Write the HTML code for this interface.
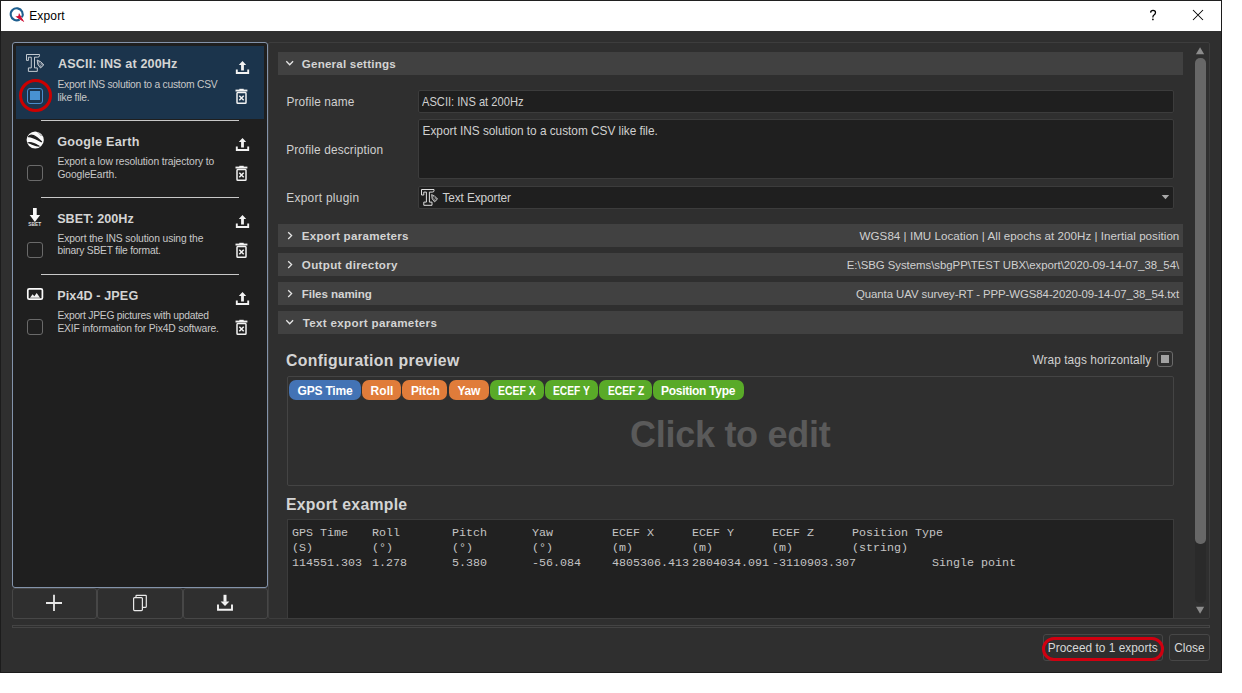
<!DOCTYPE html>
<html><head><meta charset="utf-8">
<style>
*{box-sizing:border-box;margin:0;padding:0}
html,body{width:1242px;height:693px;overflow:hidden;background:#fff;font-family:"Liberation Sans",sans-serif}
.abs{position:absolute}
.bm{display:inline-block;width:0;height:0}
#dlg{position:absolute;left:0;top:0;width:1222px;height:673px;background:#2f2f2f;border:1px solid #1c1c1c;border-top-color:#202020}
#title{position:absolute;left:1px;top:1px;width:1220px;height:30px;background:#fff}
.t{position:absolute;white-space:pre;line-height:1}
#lp{position:absolute;left:12px;top:42px;width:256px;height:546px;background:#1f1f1f;border:1px solid #8393aa;border-radius:3px}
.sel{position:absolute;left:16px;top:46px;width:248px;height:73px;background:#1b344c}
.sep{position:absolute;left:41px;width:198px;height:1px;background:#c8c8c8}
.name{font-weight:bold;font-size:12.6px;color:#d2d2d2}
.desc{font-size:9.8px;color:#c8c8c8;line-height:13px}
.cb{position:absolute;width:16px;height:16px;border:1px solid #6a6a6a;border-radius:3px}
.btn{position:absolute;top:588px;height:31px;border:1px solid #474747;border-radius:3px}
#sa{position:absolute;left:268px;top:42px;width:942px;height:577px;border:1px solid #3d3d3d;border-radius:2px}
.hdr{position:absolute;left:278px;width:905px;height:23px;background:#414141}
.hdr .ht{position:absolute;left:25px;top:6px;font-weight:bold;font-size:11.6px;color:#d2d2d2;white-space:pre;line-height:1}
.hdr .hv{position:absolute;right:4px;top:6px;font-size:12px;color:#d0d0d0;white-space:pre;line-height:1}
.fld{position:absolute;left:418px;width:756px;background:#1f1f1f;border:1px solid #3c3c3c;border-radius:2px}
.lbl{font-size:11.85px;color:#d0d0d0}
.tag{position:absolute;top:380px;height:20px;border-radius:7px;color:#fff;font-weight:bold;font-size:12px;text-align:center;line-height:20px}
.bl{background:#4373b5}.or{background:#e07c3a}.gr{background:#59aa28}
.mono{font-family:"Liberation Mono",monospace;font-size:11.67px;color:#c4c4c4}
</style></head><body>
<div id="dlg"></div>
<div id="title"></div>
<!-- logo -->
<svg class="abs" style="left:0;top:0" width="30" height="30" viewBox="0 0 30 30">
<path d="M19.7 19.5 A6 6 0 1 1 21.9 17.3" fill="none" stroke="#1e5f8f" stroke-width="2.1"/>
<path d="M19 12.9 L24.2 21.9 L15.3 16.5 L18.3 16 Z" fill="#cf1237"/><path d="M17.2 17.5 L24.2 21.9 L19.8 15.5 Z" fill="#cf1237"/>
</svg>
<svg class="abs" style="left:1145px;top:5px" width="16" height="20" viewBox="1145 5 16 20"><path d="M1150.6 12.6 Q1150.7 10.4 1153 10.4 Q1155.5 10.4 1155.5 12.6 Q1155.5 14.1 1154 15 Q1152.9 15.7 1152.9 17 V17.6" fill="none" stroke="#000" stroke-width="1.25"/><circle cx="1152.9" cy="19.4" r="0.85" fill="#000"/></svg>
<svg class="abs" style="left:1192px;top:9px" width="12" height="12" viewBox="0 0 12 12"><path d="M1 1L11 11M11 1L1 11" stroke="#000" stroke-width="1.05"/></svg>

<!-- left panel -->
<div id="lp"></div>
<div class="sel"></div>
<div class="sep" style="top:120px"></div>
<div class="sep" style="top:197px"></div>
<div class="sep" style="top:274px"></div>


<div class="cb" style="left:27px;top:88px;border-color:#4a8ccc"></div>
<div class="abs" style="left:30.2px;top:91px;width:9.6px;height:9.4px;background:#4892d2"></div>
<div class="abs" style="left:19px;top:79px;width:33px;height:33px;border:3.4px solid #cc0000;border-radius:50%"></div>
<div class="cb" style="left:27px;top:165px"></div>
<div class="cb" style="left:27px;top:242px"></div>
<div class="cb" style="left:27px;top:319px"></div>

<div class="btn" style="left:12px;width:85px"></div>
<div class="btn" style="left:97px;width:86px"></div>
<div class="btn" style="left:183px;width:85px"></div>

<!-- right -->
<div id="sa"></div>
<div class="hdr" style="top:52px"></div>
<div class="fld" style="top:90px;height:23px"></div>
<div class="fld" style="top:119px;height:60px"></div>
<div class="fld" style="top:186px;height:23px"></div>

<div class="hdr" style="top:224px"></div>
<div class="hdr" style="top:253px"></div>
<div class="hdr" style="top:282px"></div>
<div class="hdr" style="top:311px"></div>

<div class="abs" style="left:287px;top:376px;width:887px;height:110px;border:1px solid #444;border-radius:2px"></div>

<div class="abs" style="left:287px;top:519px;width:887px;height:99px;background:#212121;border:1px solid #3c3c3c;border-bottom:none"></div>

<div class="abs" style="left:12px;top:625px;width:1198px;height:3px;border:1px solid #444"></div>
<div class="abs" style="left:1043px;top:634px;width:120px;height:27px;border:1px solid #474747;border-radius:3px"></div>
<div class="abs" style="left:1169px;top:634px;width:41px;height:27px;border:1px solid #474747;border-radius:3px"></div>

<!-- item icons -->
<svg class="abs" style="left:0;top:0" width="270" height="340" viewBox="0 0 270 340">
 <g fill="none" stroke="#d6dadf" stroke-width="0.9">
  <path d="M26.5 54.5H39.5V55.8Q39.5 57.2 37.5 57.2H34.5V67.9H37.3V71.4H28.4V67.9H31.3V57.2H28.4V60.4H26.5Z"/>
 </g>
 <path d="M37.2 60 L40.8 61.8 L43.9 64.8 L40.6 68 L37.8 64.6 Z" fill="#7a8796" stroke="#d8dce0" stroke-width="0.8"/>
 <path d="M38.6 62.6 L42 66 M40.3 62 L39.5 65.5" stroke="#1b3048" stroke-width="0.7"/>
 <!-- globe -->
 <circle cx="35.2" cy="140" r="8.6" fill="#fafafa"/>
 <path d="M28.8 136.5 C31 133.5 35 135.5 41.8 142 C37 139.5 33 136.5 28.8 136.5Z" fill="#1e1e1e" stroke="#1e1e1e" stroke-width="1.3"/>
 <path d="M28.5 142.8 C31 141.8 35 144 39.5 146.3 C35 146 31.5 143.5 28.5 142.8Z" fill="#1e1e1e" stroke="#1e1e1e" stroke-width="1.1"/>
 <path d="M38 132.5 L41.5 136" stroke="#1e1e1e" stroke-width="0.9" stroke-dasharray="1 0.7"/>
 <!-- sbet arrow -->
 <rect x="33" y="208" width="3.7" height="7.5" fill="#fafafa"/>
 <path d="M29.7 215 H40.1 L34.9 222 Z" fill="#fafafa"/>
 <text x="34.8" y="226.3" font-family="Liberation Sans" font-weight="bold" font-size="5.2" fill="#dcdcdc" text-anchor="middle" textLength="13" lengthAdjust="spacingAndGlyphs">SBET</text>
 <!-- picture -->
 <rect x="27.8" y="288.8" width="14.6" height="10.4" rx="1.5" fill="none" stroke="#fafafa" stroke-width="1.7"/>
 <path d="M30 297.8 L32.6 294.2 L34.3 296.2 L36.7 293 L40 297.8 Z" fill="#f0f0f0"/>
</svg>
<!-- upload / trash icons x4 -->
<svg class="abs" style="left:0;top:0" width="270" height="340" viewBox="0 0 270 340">

<g transform="translate(0,0)">
   <path d="M242.5 61 L246.2 65 H243.9 V70.5 H241.1 V65 H238.8 Z" fill="#f2f2f2"/>
   <path d="M236.8 69.5 V73 H248.2 V69.5" fill="none" stroke="#f2f2f2" stroke-width="1.9"/>
  
   <rect x="235.5" y="89.6" width="11.9" height="1.9" fill="#f2f2f2"/>
   <rect x="239.3" y="88.8" width="4.4" height="1.5" fill="#f2f2f2"/>
   <rect x="237" y="92.6" width="9" height="10.6" rx="0.8" fill="none" stroke="#f2f2f2" stroke-width="1.5"/>
   <path d="M239.3 95.8 L243.7 100.3 M243.7 95.8 L239.3 100.3" stroke="#f2f2f2" stroke-width="1.5"/>
  </g>
<g transform="translate(0,77)">
   <path d="M242.5 61 L246.2 65 H243.9 V70.5 H241.1 V65 H238.8 Z" fill="#f2f2f2"/>
   <path d="M236.8 69.5 V73 H248.2 V69.5" fill="none" stroke="#f2f2f2" stroke-width="1.9"/>
  
   <rect x="235.5" y="89.6" width="11.9" height="1.9" fill="#f2f2f2"/>
   <rect x="239.3" y="88.8" width="4.4" height="1.5" fill="#f2f2f2"/>
   <rect x="237" y="92.6" width="9" height="10.6" rx="0.8" fill="none" stroke="#f2f2f2" stroke-width="1.5"/>
   <path d="M239.3 95.8 L243.7 100.3 M243.7 95.8 L239.3 100.3" stroke="#f2f2f2" stroke-width="1.5"/>
  </g>
<g transform="translate(0,154)">
   <path d="M242.5 61 L246.2 65 H243.9 V70.5 H241.1 V65 H238.8 Z" fill="#f2f2f2"/>
   <path d="M236.8 69.5 V73 H248.2 V69.5" fill="none" stroke="#f2f2f2" stroke-width="1.9"/>
  
   <rect x="235.5" y="89.6" width="11.9" height="1.9" fill="#f2f2f2"/>
   <rect x="239.3" y="88.8" width="4.4" height="1.5" fill="#f2f2f2"/>
   <rect x="237" y="92.6" width="9" height="10.6" rx="0.8" fill="none" stroke="#f2f2f2" stroke-width="1.5"/>
   <path d="M239.3 95.8 L243.7 100.3 M243.7 95.8 L239.3 100.3" stroke="#f2f2f2" stroke-width="1.5"/>
  </g>
<g transform="translate(0,231)">
   <path d="M242.5 61 L246.2 65 H243.9 V70.5 H241.1 V65 H238.8 Z" fill="#f2f2f2"/>
   <path d="M236.8 69.5 V73 H248.2 V69.5" fill="none" stroke="#f2f2f2" stroke-width="1.9"/>
  
   <rect x="235.5" y="89.6" width="11.9" height="1.9" fill="#f2f2f2"/>
   <rect x="239.3" y="88.8" width="4.4" height="1.5" fill="#f2f2f2"/>
   <rect x="237" y="92.6" width="9" height="10.6" rx="0.8" fill="none" stroke="#f2f2f2" stroke-width="1.5"/>
   <path d="M239.3 95.8 L243.7 100.3 M243.7 95.8 L239.3 100.3" stroke="#f2f2f2" stroke-width="1.5"/>
  </g>

</svg>
<!-- bottom buttons icons -->
<svg class="abs" style="left:0;top:580px" width="270" height="40" viewBox="0 580 270 40">
 <path d="M54 594.8 V611 M46 603 H62" stroke="#e8e8e8" stroke-width="1.8"/>
 <rect x="133.6" y="597.6" width="8.8" height="13" rx="1" fill="none" stroke="#e8e8e8" stroke-width="1.2"/>
 <path d="M136 597.5 V595.8 Q136 595.3 136.6 595.3 H145.6 Q146.3 595.3 146.3 596 V606.6 Q146.3 607.3 145.6 607.3 H143" fill="none" stroke="#e8e8e8" stroke-width="1.2"/>
 <rect x="223.5" y="594.8" width="3" height="7" fill="#f2f2f2"/>
 <path d="M220.6 601.5 H229.4 L225 606 Z" fill="#f2f2f2"/>
 <path d="M218 604.5 V609.8 H232 V604.5" fill="none" stroke="#f2f2f2" stroke-width="1.9"/>
</svg>
<!-- chevrons -->
<svg class="abs" style="left:280px;top:40px" width="20" height="300" viewBox="280 40 20 300">
 <g fill="none" stroke="#e6e6e6" stroke-width="1.3">
  <path d="M286.3 61.2 L289.7 64.8 L293.1 61.2"/>
  <path d="M288.2 232.2 L291.6 235.6 L288.2 239"/>
  <path d="M288.2 261.2 L291.6 264.6 L288.2 268"/>
  <path d="M288.2 290.2 L291.6 293.6 L288.2 297"/>
  <path d="M286.3 320.2 L289.7 323.8 L293.1 320.2"/>
 </g>
</svg>
<!-- plugin icon in combo -->
<svg class="abs" style="left:418px;top:186px" width="22" height="22" viewBox="0 0 22 22">
 <path d="M3.5 3.5H16V4.8Q16 6.1 14.2 6.1H11.4V16.1H14V19.3H5.8V16.1H8.4V6.1H5.8V9H3.5Z" fill="none" stroke="#dedede" stroke-width="1"/>
 <path d="M13.6 8.5 L16.8 10.2 L19.6 13 L16.6 15.9 L14.1 12.8 Z" fill="#777" stroke="#d0d0d0" stroke-width="0.8"/>
 <path d="M14.9 10.9 L18 14 M16.5 10.3 L15.8 13.5" stroke="#212121" stroke-width="0.7"/>
</svg>
<svg class="abs" style="left:1160px;top:193px" width="12" height="8" viewBox="0 0 12 8"><path d="M1.7 1.9 H9.2 L5.45 6.2Z" fill="#a8a8a8"/></svg>
<!-- wrap checkbox -->
<div class="cb" style="left:1157px;top:351px;border-color:#6a6a6a"></div>
<div class="abs" style="left:1161px;top:355px;width:8px;height:8px;background:#a2a2a2"></div>
<!-- scrollbar -->
<div class="abs" style="left:1195px;top:58px;width:11px;height:545px;background:#2a2a2a;border-radius:5px"></div>
<div class="abs" style="left:1195px;top:58px;width:11px;height:486px;background:#676767;border-radius:5px"></div>
<svg class="abs" style="left:1190px;top:44px" width="20" height="14" viewBox="0 0 20 14"><path d="M5.9 10.3 H14.2 L10.05 3.2Z" fill="#8c8c8c"/></svg>
<svg class="abs" style="left:1190px;top:604px" width="20" height="12" viewBox="0 0 20 12"><path d="M6 2.8 H14.2 L10.1 9.7Z" fill="#8c8c8c"/></svg>
<!-- mono text -->
<div class="abs mono" style="left:292px;top:526px;line-height:15px;white-space:pre">
<span class="abs" style="left:0;top:0">GPS Time</span><span class="abs" style="left:80px;top:0">Roll</span><span class="abs" style="left:160px;top:0">Pitch</span><span class="abs" style="left:240px;top:0">Yaw</span><span class="abs" style="left:320px;top:0">ECEF X</span><span class="abs" style="left:400px;top:0">ECEF Y</span><span class="abs" style="left:480px;top:0">ECEF Z</span><span class="abs" style="left:560px;top:0">Position Type</span>
<span class="abs" style="left:0;top:15px">(S)</span><span class="abs" style="left:80px;top:15px">(°)</span><span class="abs" style="left:160px;top:15px">(°)</span><span class="abs" style="left:240px;top:15px">(°)</span><span class="abs" style="left:320px;top:15px">(m)</span><span class="abs" style="left:400px;top:15px">(m)</span><span class="abs" style="left:480px;top:15px">(m)</span><span class="abs" style="left:560px;top:15px">(string)</span>
<span class="abs" style="left:0;top:30px">114551.303</span><span class="abs" style="left:80px;top:30px">1.278</span><span class="abs" style="left:160px;top:30px">5.380</span><span class="abs" style="left:240px;top:30px">-56.084</span><span class="abs" style="left:320px;top:30px">4805306.413</span><span class="abs" style="left:400px;top:30px">2804034.091</span><span class="abs" style="left:480px;top:30px">-3110903.307</span><span class="abs" style="left:640px;top:30px">Single point</span>
</div>
<!-- red highlight on proceed -->
<div class="abs" style="left:1042px;top:637px;width:122px;height:23.5px;border:3.4px solid #d00010;border-radius:12px"></div>
<div class="tag bl" style="left:289px;width:72px"></div>
<div class="tag or" style="left:362px;width:39px"></div>
<div class="tag or" style="left:402px;width:45px"></div>
<div class="tag or" style="left:449px;width:40px"></div>
<div class="tag gr" style="left:490px;width:54px"></div>
<div class="tag gr" style="left:545px;width:53px"></div>
<div class="tag gr" style="left:599px;width:53px"></div>
<div class="tag gr" style="left:653px;width:91px"></div>
<div class="t" id="ttl" style="left:29.20px;top:9.80px;font-size:12px;font-weight:400;color:#000;letter-spacing:0.160px;">Export<i class="bm"></i></div>
<div class="t" id="n1" style="left:58.00px;top:58.30px;font-size:12.6px;font-weight:700;color:#d4d4d4;letter-spacing:0.139px;">ASCII: INS at 200Hz<i class="bm"></i></div>
<div class="t" id="n2" style="left:57.20px;top:135.70px;font-size:12.6px;font-weight:700;color:#d4d4d4;letter-spacing:0.282px;">Google Earth<i class="bm"></i></div>
<div class="t" id="n3" style="left:57.20px;top:212.70px;font-size:12.6px;font-weight:700;color:#d4d4d4;letter-spacing:0.030px;">SBET: 200Hz<i class="bm"></i></div>
<div class="t" id="n4" style="left:57.20px;top:289.70px;font-size:12.6px;font-weight:700;color:#d4d4d4;letter-spacing:0.109px;">Pix4D - JPEG<i class="bm"></i></div>
<div class="t" id="d1a" style="left:57.40px;top:80.00px;font-size:10.3px;font-weight:400;color:#c8c8c8;letter-spacing:-0.235px;">Export INS solution to a custom CSV<i class="bm"></i></div>
<div class="t" id="d1b" style="left:57.40px;top:92.70px;font-size:10.3px;font-weight:400;color:#c8c8c8;letter-spacing:-0.222px;">like file.<i class="bm"></i></div>
<div class="t" id="d2a" style="left:57.40px;top:156.90px;font-size:10.3px;font-weight:400;color:#c8c8c8;letter-spacing:-0.111px;">Export a low resolution trajectory to<i class="bm"></i></div>
<div class="t" id="d2b" style="left:57.40px;top:169.50px;font-size:10.3px;font-weight:400;color:#c8c8c8;letter-spacing:-0.091px;">GoogleEarth.<i class="bm"></i></div>
<div class="t" id="d3a" style="left:57.40px;top:234.00px;font-size:10.3px;font-weight:400;color:#c8c8c8;letter-spacing:-0.125px;">Export the INS solution using the<i class="bm"></i></div>
<div class="t" id="d3b" style="left:57.40px;top:246.40px;font-size:10.3px;font-weight:400;color:#c8c8c8;letter-spacing:-0.217px;">binary SBET file format.<i class="bm"></i></div>
<div class="t" id="d4a" style="left:57.40px;top:311.00px;font-size:10.3px;font-weight:400;color:#c8c8c8;letter-spacing:-0.250px;">Export JPEG pictures with updated<i class="bm"></i></div>
<div class="t" id="d4b" style="left:57.40px;top:323.50px;font-size:10.3px;font-weight:400;color:#c8c8c8;letter-spacing:-0.143px;">EXIF information for Pix4D software.<i class="bm"></i></div>
<div class="t" id="h1" style="left:301.80px;top:57.80px;font-size:11.6px;font-weight:700;color:#d4d4d4;letter-spacing:0.200px;">General settings<i class="bm"></i></div>
<div class="t" id="h2" style="left:301.80px;top:229.90px;font-size:11.6px;font-weight:700;color:#d4d4d4;letter-spacing:0.269px;">Export parameters<i class="bm"></i></div>
<div class="t" id="h3" style="left:301.80px;top:258.90px;font-size:11.6px;font-weight:700;color:#d4d4d4;letter-spacing:0.327px;">Output directory<i class="bm"></i></div>
<div class="t" id="h4" style="left:301.80px;top:287.90px;font-size:11.6px;font-weight:700;color:#d4d4d4;letter-spacing:-0.073px;">Files naming<i class="bm"></i></div>
<div class="t" id="h5" style="left:302.80px;top:316.90px;font-size:11.6px;font-weight:700;color:#d4d4d4;letter-spacing:0.319px;">Text export parameters<i class="bm"></i></div>
<div class="t" id="v2" style="left:859.60px;top:229.50px;font-size:11.6px;font-weight:400;color:#d0d0d0;letter-spacing:0.033px;">WGS84 | IMU Location | All epochs at 200Hz | Inertial position<i class="bm"></i></div>
<div class="t" id="v3" style="left:846.80px;top:259.50px;font-size:11.4px;font-weight:400;color:#d0d0d0;letter-spacing:-0.032px;">E:\SBG Systems\sbgPP\TEST UBX\export\2020-09-14-07_38_54\<i class="bm"></i></div>
<div class="t" id="v4" style="left:856.00px;top:288.50px;font-size:11.4px;font-weight:400;color:#d0d0d0;letter-spacing:-0.065px;">Quanta UAV survey-RT - PPP-WGS84-2020-09-14-07_38_54.txt<i class="bm"></i></div>
<div class="t" id="l1" style="left:286.40px;top:96.50px;font-size:11.85px;font-weight:400;color:#d0d0d0;letter-spacing:0.136px;">Profile name<i class="bm"></i></div>
<div class="t" id="l2" style="left:286.20px;top:144.80px;font-size:11.85px;font-weight:400;color:#d0d0d0;letter-spacing:0.150px;">Profile description<i class="bm"></i></div>
<div class="t" id="l3" style="left:286.20px;top:192.80px;font-size:11.85px;font-weight:400;color:#d0d0d0;letter-spacing:0.317px;">Export plugin<i class="bm"></i></div>
<div class="t" id="f1" style="left:422.00px;top:96.60px;font-size:11.85px;font-weight:400;color:#d0d0d0;letter-spacing:0.000px;transform:scaleX(0.9402);transform-origin:0 0;">ASCII: INS at 200Hz<i class="bm"></i></div>
<div class="t" id="f2" style="left:422.60px;top:126.20px;font-size:11.85px;font-weight:400;color:#d0d0d0;letter-spacing:-0.024px;">Export INS solution to a custom CSV like file.<i class="bm"></i></div>
<div class="t" id="f3" style="left:442.40px;top:192.70px;font-size:11.85px;font-weight:400;color:#d0d0d0;letter-spacing:-0.092px;">Text Exporter<i class="bm"></i></div>
<div class="t" id="cp" style="left:286.00px;top:352.90px;font-size:15.8px;font-weight:700;color:#d4d4d4;letter-spacing:0.325px;">Configuration preview<i class="bm"></i></div>
<div class="t" id="ee" style="left:286.00px;top:496.80px;font-size:15.8px;font-weight:700;color:#d4d4d4;letter-spacing:0.269px;">Export example<i class="bm"></i></div>
<div class="t" id="wr" style="left:1032.40px;top:355.00px;font-size:11.85px;font-weight:400;color:#d0d0d0;letter-spacing:0.086px;">Wrap tags horizontally<i class="bm"></i></div>
<div class="t" id="ce" style="left:630.00px;top:417.00px;font-size:36px;font-weight:700;color:#5a5a5a;letter-spacing:-0.275px;">Click to edit<i class="bm"></i></div>
<div class="t" id="b1" style="left:1047.80px;top:643.10px;font-size:11.85px;font-weight:400;color:#d8d8d8;letter-spacing:0.032px;">Proceed to 1 exports<i class="bm"></i></div>
<div class="t" id="b2" style="left:1174.20px;top:643.10px;font-size:11.85px;font-weight:400;color:#d8d8d8;letter-spacing:0.050px;">Close<i class="bm"></i></div>
<div class="t" id="tg1" style="left:297.50px;top:384.80px;font-size:12px;font-weight:700;color:#fff;letter-spacing:-0.200px;">GPS Time<i class="bm"></i></div>
<div class="t" id="tg2" style="left:370.50px;top:384.80px;font-size:12px;font-weight:700;color:#fff;letter-spacing:0.067px;">Roll<i class="bm"></i></div>
<div class="t" id="tg3" style="left:411.00px;top:384.80px;font-size:12px;font-weight:700;color:#fff;letter-spacing:-0.150px;">Pitch<i class="bm"></i></div>
<div class="t" id="tg4" style="left:457.50px;top:384.80px;font-size:12px;font-weight:700;color:#fff;letter-spacing:-0.300px;">Yaw<i class="bm"></i></div>
<div class="t" id="tg5" style="left:498.10px;top:384.80px;font-size:12px;font-weight:700;color:#fff;letter-spacing:0.000px;transform:scaleX(0.8683);transform-origin:0 0;">ECEF X<i class="bm"></i></div>
<div class="t" id="tg6" style="left:553.20px;top:384.80px;font-size:12px;font-weight:700;color:#fff;letter-spacing:0.000px;transform:scaleX(0.8538);transform-origin:0 0;">ECEF Y<i class="bm"></i></div>
<div class="t" id="tg7" style="left:607.50px;top:384.80px;font-size:12px;font-weight:700;color:#fff;letter-spacing:0.000px;transform:scaleX(0.8502);transform-origin:0 0;">ECEF Z<i class="bm"></i></div>
<div class="t" id="tg8" style="left:661.00px;top:384.80px;font-size:12px;font-weight:700;color:#fff;letter-spacing:-0.283px;">Position Type<i class="bm"></i></div>
</body></html>
